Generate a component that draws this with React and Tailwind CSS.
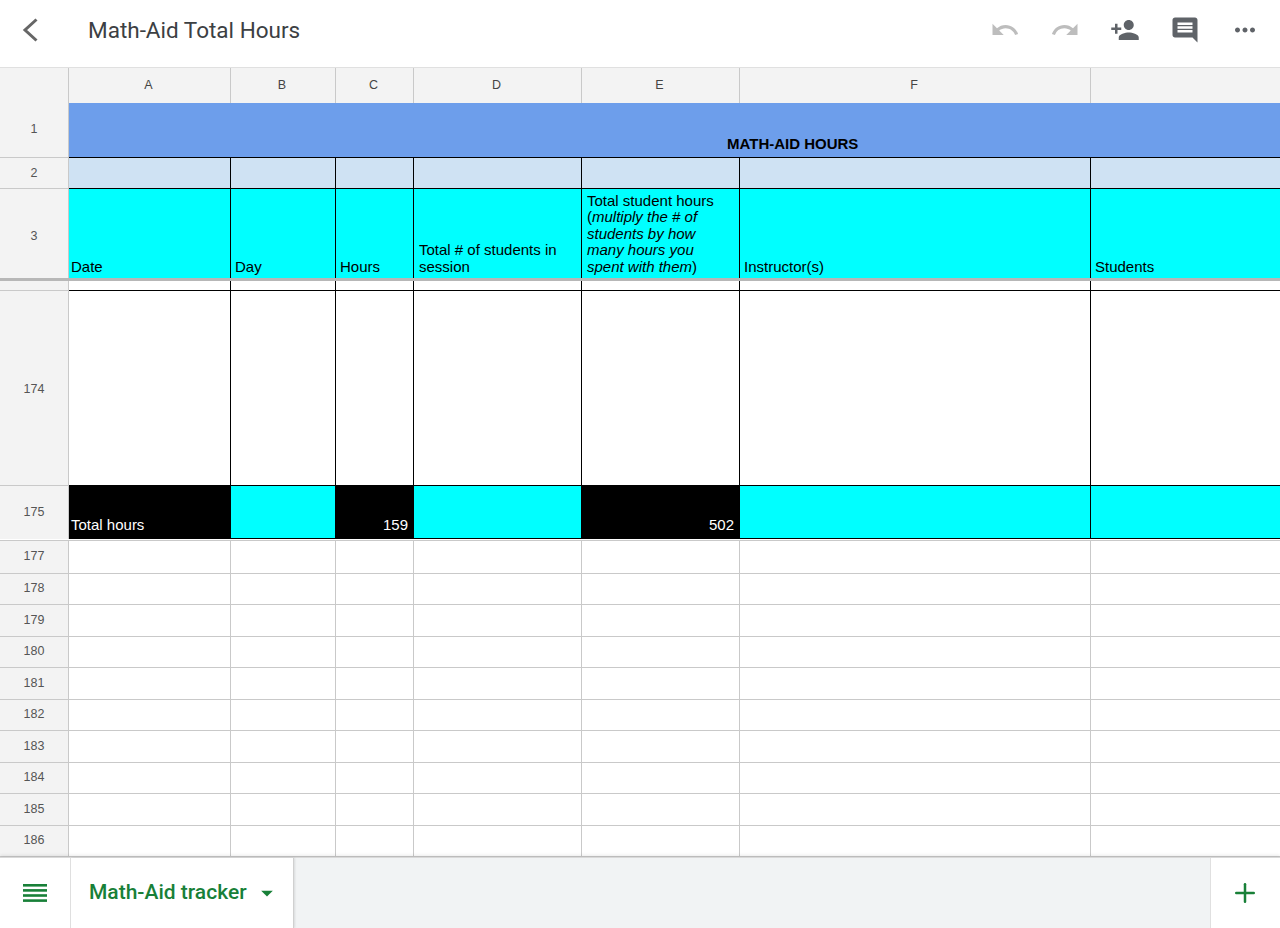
import React from 'react';
import { Plus } from 'lucide-react';
import { MdUndo, MdRedo, MdPersonAdd, MdComment, MdMoreHoriz, MdArrowDropDown } from 'react-icons/md';

const COLS = ['w-[162px]', 'w-[105px]', 'w-[78px]', 'w-[168px]', 'w-[158px]', 'w-[351px]', 'flex-1 border-r-0'];
const LETTERS = ['A', 'B', 'C', 'D', 'E', 'F', ''];
const CYAN = 'bg-[#00ffff]';
const GRID = 'border-[#c9c9c9]';
const LOWER_ROWS = [
  ['177', 'h-[33px]'], ['178', 'h-[31px]'], ['179', 'h-[32px]'], ['180', 'h-[31px]'], ['181', 'h-[32px]'],
  ['182', 'h-[31px]'], ['183', 'h-[32px]'], ['184', 'h-[31px]'], ['185', 'h-[32px]'], ['186', 'h-[31px]'],
];

const RowHead = ({ className = '', children }) => (
  <div className={`flex w-[69px] shrink-0 items-center justify-center border-r border-b border-[#c9c9c9] bg-[#f3f3f3] text-[12.5px] text-[#555] ${className}`}>
    {children}
  </div>
);

const Cell = ({ col, className = '', children }) => (
  <div className={`flex items-end border-r border-b pl-1 text-[15px] leading-[16.5px] ${COLS[col]} ${className}`}>
    {children}
  </div>
);

const App = () => {
  return (
    <div className="flex h-[928px] w-[1280px] flex-col overflow-hidden bg-white font-['Liberation_Sans',Arial,sans-serif] text-black">
      {/* Top bar */}
      <header className="flex h-[67px] shrink-0 items-center bg-white pb-[7px]">
        <svg width="16" height="24" viewBox="0 0 16 24" fill="none" stroke="#666" strokeWidth="3" className="ml-[22px]">
          <path d="M14.5 1.5 3 12l11.5 10.5" />
        </svg>
        <h1 className="mt-[1px] ml-[50px] font-['Roboto',sans-serif] text-[22.5px] text-[#3c4043]">Math-Aid Total Hours</h1>
        <div className="ml-auto flex items-center gap-[30px] pr-[20px] text-[#5f6368]">
          <MdUndo size={30} className="text-[#bdbdbd]" />
          <MdRedo size={30} className="text-[#bdbdbd]" />
          <MdPersonAdd size={30} />
          <MdComment size={30} />
          <MdMoreHoriz size={30} />
        </div>
      </header>

      {/* Sheet */}
      <main className="flex min-h-0 flex-1 flex-col">
        <div className="flex h-[36px] border-t border-[#e0e0e0] bg-[#f3f3f3]">
          <div className={`w-[69px] shrink-0 border-r ${GRID}`} />
          {LETTERS.map((letter, i) => (
            <div key={i} className={`flex items-center justify-center border-r pr-[2px] text-[12.5px] text-[#444] ${GRID} ${COLS[i]}`}>
              {letter}
            </div>
          ))}
        </div>

        <div className="flex h-[55px]">
          <RowHead className="pb-[2px]">1</RowHead>
          <div className="flex flex-1 items-end border-b border-black bg-[#6d9eeb] pb-[5px] pl-[658px] text-[15px] leading-[16.5px] font-bold">
            MATH-AID HOURS
          </div>
        </div>

        <div className="flex h-[31px]">
          <RowHead>2</RowHead>
          {COLS.map((_, i) => (
            <Cell key={i} col={i} className="border-black bg-[#cfe2f3]" />
          ))}
        </div>

        <div className="flex h-[89px]">
          <RowHead className="border-b-0 pt-[5px]">3</RowHead>
          <Cell col={0} className={`border-b-0 border-black pb-[3px] pl-[2px] ${CYAN}`}>Date</Cell>
          <Cell col={1} className={`border-b-0 border-black pb-[3px] ${CYAN}`}>Day</Cell>
          <Cell col={2} className={`border-b-0 border-black pb-[3px] ${CYAN}`}>Hours</Cell>
          <Cell col={3} className={`border-b-0 border-black pb-[3px] pl-[5px] ${CYAN}`}><span>Total # of students in session</span></Cell>
          <Cell col={4} className={`border-b-0 border-black pr-[8px] pb-[3px] pl-[5px] ${CYAN}`}>
            <span>Total student hours (<i>multiply the # of students by how many hours you spent with them</i>)</span>
          </Cell>
          <Cell col={5} className={`border-b-0 border-black pb-[3px] ${CYAN}`}>Instructor(s)</Cell>
          <Cell col={6} className={`border-b-0 border-black pb-[3px] ${CYAN}`}>Students</Cell>
        </div>

        {/* Freeze divider */}
        <div className="h-[3px] bg-[#b7b7b7]" />

        <div className="flex h-[10px]">
          <RowHead />
          {COLS.map((_, i) => (
            <Cell key={i} col={i} className="border-black" />
          ))}
        </div>

        <div className="flex h-[195px]">
          <RowHead className="pt-[2px]">174</RowHead>
          {COLS.map((_, i) => (
            <Cell key={i} col={i} className="border-black" />
          ))}
        </div>

        <div className="flex h-[53px]">
          <RowHead className="border-b-0">175</RowHead>
          <Cell col={0} className="border-black bg-black pb-[5px] pl-[2px] text-white">Total hours</Cell>
          <Cell col={1} className={`border-black ${CYAN}`} />
          <Cell col={2} className="justify-end border-black bg-black pr-[5px] pb-[5px] text-white">159</Cell>
          <Cell col={3} className={`border-black ${CYAN}`} />
          <Cell col={4} className="justify-end border-black bg-black pr-[5px] pb-[5px] text-white">502</Cell>
          <Cell col={5} className={`border-black ${CYAN}`} />
          <Cell col={6} className={`border-black ${CYAN}`} />
        </div>
        <div className={`h-[2px] border-b ${GRID}`} />

        {LOWER_ROWS.map(([num, height]) => (
          <div key={num} className={`flex ${height}`}>
            <RowHead className="pb-[1px]">{num}</RowHead>
            {COLS.map((_, i) => (
              <Cell key={i} col={i} className={GRID} />
            ))}
          </div>
        ))}
      </main>

      {/* Sheet tabs */}
      <footer className="flex h-[71px] shrink-0 border-t border-[#d9d9d9] bg-[#f1f3f4] text-[#188038] shadow-[0_-2px_3px_rgba(0,0,0,0.08)]">
        <div className="flex w-[71px] items-center justify-center border-r border-[#e0e0e0] bg-white">
          <svg width="24" height="18" viewBox="0 0 24 18" fill="currentColor">
            <rect y="0" width="24" height="2.6" />
            <rect y="5.1" width="24" height="2.6" />
            <rect y="10.2" width="24" height="2.6" />
            <rect y="15.3" width="24" height="2.6" />
          </svg>
        </div>
        <div className="flex w-[223px] items-center border-r border-[#d0d0d0] bg-white pl-[18px] shadow-[1px_0_2px_rgba(0,0,0,0.1)]">
          <span className="font-['Roboto',sans-serif] text-[21px] font-medium">Math-Aid tracker</span>
          <MdArrowDropDown size={28} className="ml-[6px]" />
        </div>
        <div className="ml-auto flex w-[70px] items-center justify-center border-l border-[#e0e0e0] bg-white pr-[1px]">
          <Plus size={30} strokeWidth={2} />
        </div>
      </footer>
    </div>
  );
};

export default App;
